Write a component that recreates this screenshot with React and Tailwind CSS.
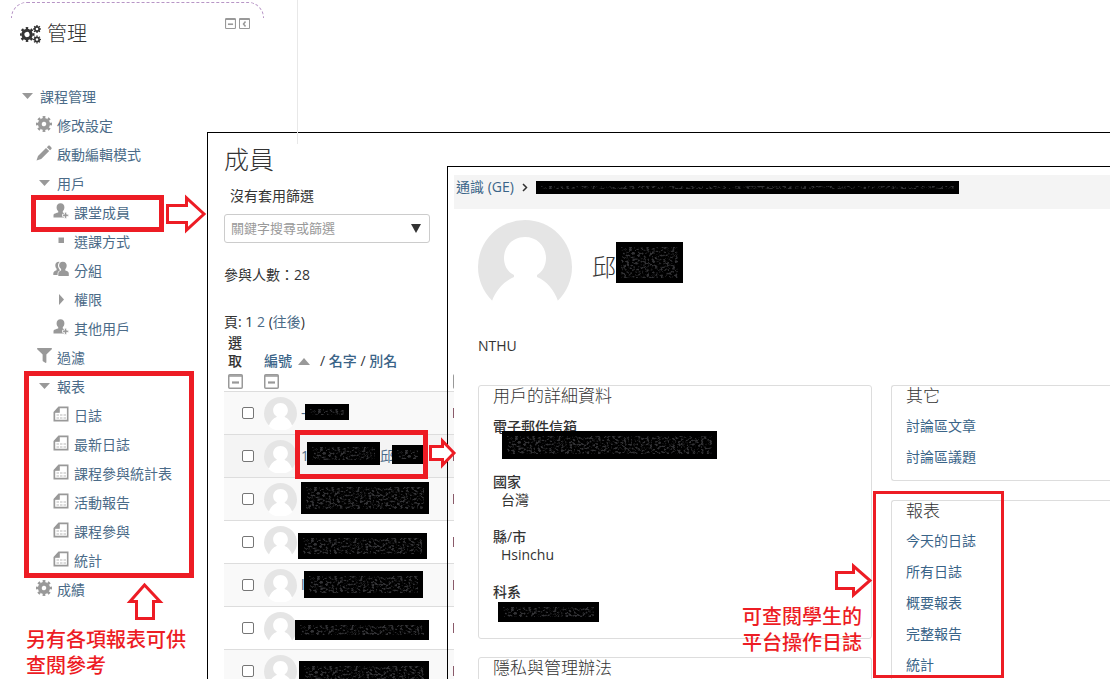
import { FaFilter } from "react-icons/fa"

const menu = {
  label: "課程管理",
  icon: "open",
  children: [
    { label: "修改設定", icon: "cog" },
    { label: "啟動編輯模式", icon: "pencil" },
    {
      label: "用戶",
      icon: "open",
      children: [
        { label: "課堂成員", icon: "user" },
        { label: "選課方式", icon: "dot" },
        { label: "分組", icon: "group" },
        { label: "權限", icon: "closed" },
        { label: "其他用戶", icon: "user" },
      ],
    },
    { label: "過濾", icon: "filter" },
    {
      label: "報表",
      icon: "open",
      children: [
        { label: "日誌", icon: "report" },
        { label: "最新日誌", icon: "report" },
        { label: "課程參與統計表", icon: "report" },
        { label: "活動報告", icon: "report" },
        { label: "課程參與", icon: "report" },
        { label: "統計", icon: "report" },
      ],
    },
    { label: "成績", icon: "cog" },
  ],
}

const members = [
  { id: 1, name: "-", row: "bg-[#f9f9f9]" },
  { id: 2, name: "1", family: "邱", row: "bg-[#f4f4f4]" },
  { id: 3, name: "", row: "bg-[#f9f9f9]" },
  { id: 4, name: "", row: "bg-white" },
  { id: 5, name: "l", row: "bg-[#f9f9f9]" },
  { id: 6, name: "", row: "bg-white" },
  { id: 7, name: "", row: "bg-[#f9f9f9]" },
]

const details = [
  { term: "電子郵件信箱", value: "" },
  { term: "國家", value: "台灣" },
  { term: "縣/市", value: "Hsinchu" },
  { term: "科系", value: "" },
]

// Zonas tapadas: datos personales
const masks = [
  { left: 305, top: 404, width: 44, height: 16 },
  { left: 307, top: 442, width: 73, height: 23 },
  { left: 392, top: 445, width: 31, height: 19 },
  { left: 301, top: 482, width: 128, height: 32 },
  { left: 298, top: 533, width: 129, height: 26 },
  { left: 304, top: 571, width: 119, height: 27 },
  { left: 295, top: 620, width: 134, height: 20 },
  { left: 299, top: 661, width: 130, height: 24 },
  { left: 536, top: 181, width: 423, height: 13 },
  { left: 616, top: 242, width: 67, height: 41 },
  { left: 502, top: 431, width: 215, height: 28 },
  { left: 498, top: 602, width: 101, height: 20 },
]

// Engranaje: un anillo y ocho dientes
const Gear = ({ x, y, r, hole }) => {
  const ring = r * 0.76
  return (
    <g transform={`translate(${x} ${y}) rotate(-11)`} fill="none" stroke="currentColor">
      <circle r={(ring + hole) / 2} strokeWidth={ring - hole} />
      <circle r={r * 0.85} strokeWidth={r * 0.3} pathLength="16" strokeDasharray="1 1" />
    </g>
  )
}

const MenuIcon = ({ name }) => {
  if (name === "filter") return <FaFilter size={15} />
  return (
    <svg width="16" height="16" viewBox="0 0 16 16" fill="currentColor" aria-hidden="true">
      {name === "cog" && <Gear x={8} y={8} r={8} hole={2.3} />}
      {name === "pencil" && (
        <path d="M12.300.8c.5-.4 1-.4 1.500 0l1.600 1.600c.4.5.4 1 0 1.500L14 5.300 10.800 2.200zM10 3l3.200 3.100-8 8L.500 15.500 2 11z" />
      )}
      {name === "open" && <path d="M3 6h11l-5.500 6z" />}
      {name === "closed" && <path d="M6 4l5 5.500-5 5.500z" />}
      {name === "dot" && <rect x="5.500" y="5.500" width="5.500" height="5.500" />}
      {name === "user" && (
        <>
          <path d="M7.500.3c2.600 0 4 1.700 3.900 4.100-.1 1.800-.8 2.900-1.600 3.700v1.400l2.200 1v4H.5v-2.200c0-1.300 1-1.800 4.700-2.800V8.100c-.8-.8-1.600-2-1.600-3.700C3.600 2 4.900.3 7.500.3z" />
          <path d="M11.500 9.200h2.200v2h2v2.200h-2v2h-2.200v-2h-2v-2.200h2z" stroke="#fff" strokeWidth=".8" />
        </>
      )}
      {name === "group" && (
        <>
          <path d="M6 .8C3.700.8 2.200 2.400 2.300 4.500c.1 1.500.6 2.500 1.300 3.200v1.600C1.500 10 .3 11 .3 12.500V14h4.300v-1.500c0-1.500.7-2.500 2.500-3.300C6 7.800 5 6.500 5 4.500c0-1.500.5-2.600 1.700-3.600z" />
          <path d="M9.800.8c2.600 0 4 1.700 3.900 4-.1 1.600-.7 2.600-1.400 3.400v1.200c2.700.8 3.500 1.500 3.500 3V15H5.300v-2.600c0-1.500 1-2.300 2.800-3V8.100C7.300 7.300 6.100 6.200 6.100 4.600 6.100 2.500 7.500.8 9.800.8z" />
        </>
      )}
      {name === "report" && (
        <>
          <path fillRule="evenodd" d="M5.500.5h10v15H.500V6zM6.800 2.200v4.600H2.200V13.800h11.700V2.200z" />
          <path d="M1 6.500L6 1v5.500z" opacity=".5" />
          <path d="M3.500 8h2.500v2H3.500zM7 8h2.500v2H7zM10.500 8h2.500v2h-2.500zM3.500 11h2.500v2H3.500zM7 11h2.500v2H7zM10.500 11h2.500v2h-2.500z" opacity=".35" />
        </>
      )}
    </svg>
  )
}

const MenuItem = ({ item }) => (
  <li>
    <a href="#" className="flex h-[29px] items-center gap-[5px] text-sm text-[#4b6b88]">
      <span className="flex w-4 justify-center pb-1 text-[#999999]">
        <MenuIcon name={item.icon} />
      </span>
      {item.label}
    </a>
    {item.children && (
      <ul className="pl-[17px]">
        {item.children.map((child) => (
          <MenuItem key={child.label} item={child} />
        ))}
      </ul>
    )}
  </li>
)

const Avatar = ({ className }) => (
  <svg className={className} viewBox="0 0 94 94" aria-hidden="true">
    <clipPath id="avatar-clip">
      <circle cx="47" cy="47" r="49" />
    </clipPath>
    <circle cx="47" cy="47" r="47" fill="#e5e5e5" />
    <path
      clipPath="url(#avatar-clip)"
      fill="#fff"
      d="M47 17c12 0 21 9 21 21 0 8-4 14-9 17v2c10 4 17 13 21 24l14 4v9H0v-9l14-4c4-11 12-20 22-24v-2c-6-3-10-9-10-17 0-12 9-21 21-21z"
    />
  </svg>
)

const BoxMinus = ({ label, className }) => (
  <button type="button" aria-label={label} className={className}>
    <svg className="size-full" viewBox="0 0 15 15" fill="none" stroke="#999">
      <rect x=".75" y=".75" width="13.500" height="13.500" rx="1" strokeWidth="1.500" />
      <path d="M1 2h13" strokeWidth="1.500" />
      <path d="M4 8.500h7" strokeWidth="2.200" />
    </svg>
  </button>
)

const Mask = ({ box }) => (
  <div className="absolute bg-black p-[5px]" style={box}>
    <svg className="block size-full">
      <rect width="100%" height="100%" fill="url(#grain)" />
    </svg>
  </div>
)

const Arrow = ({ className, width, height, d }) => (
  <svg
    className={className}
    width={width}
    height={height}
    viewBox={`0 0 ${width} ${height}`}
    fill="#fff"
    stroke="#ed1c24"
    strokeWidth="3"
    aria-hidden="true"
  >
    <path d={d} />
  </svg>
)

const Sidebar = () => (
  <aside className="w-[297px]">
    <div className="ml-[11px] pt-0.5">
      <div className="h-4 w-[253px] rounded-t-[20px] border border-b-0 border-dashed border-[#b795c6]" />
    </div>
    <div className="flex items-start justify-between pr-[47px] pl-5">
      <h2 className="mt-0.5 flex items-center gap-1.5 text-xl leading-7 font-light text-[#333333]">
        <svg width="21" height="20" viewBox="0 0 21 20" aria-hidden="true">
          <Gear x={7} y={10.5} r={7.5} hole={2.6} />
          <Gear x={17} y={5} r={4} hole={1.3} />
          <Gear x={17} y={15.5} r={4} hole={1.3} />
        </svg>
        管理
      </h2>
      <div className="flex gap-[3px]">
        <BoxMinus label="收合區塊" className="size-[11px]" />
        <button type="button" aria-label="停駐區塊" className="size-[11px]">
          <svg className="size-full" viewBox="0 0 11 11" fill="none" stroke="#999">
            <path d="M.5.5h10v10H.5zM.5 1.500h10" />
            <path d="M6.500 3.500l-2 2.500 2 2.500" strokeWidth="1.500" />
          </svg>
        </button>
      </div>
    </div>
    <nav className="mt-[34px] pl-[19px]">
      <ul>
        <MenuItem item={menu} />
      </ul>
    </nav>
  </aside>
)

const MembersTable = () => (
  <table className="mt-0.5 w-full table-fixed text-sm">
    <colgroup>
      <col className="w-10" />
      <col className="w-[189px]" />
      <col />
    </colgroup>
    <thead>
      <tr className="text-left align-bottom leading-[18px]">
        <th className="pb-0.5 pl-1 font-medium">
          <span className="block w-4">選取</span>
          <BoxMinus label="隱藏選取" className="mt-1 block size-[15px]" />
        </th>
        <th className="pb-0.5 font-medium">
          <span className="flex items-center gap-1.5 text-[#3a6488]">
            <a href="#">編號</a>
            <svg width="12" height="7" viewBox="0 0 12 7" fill="#999" aria-hidden="true">
              <path d="M6 0l6 7H0z" />
            </svg>
            <span className="pl-1">
              <span className="text-[#333333]">/</span> <a href="#">名字</a> <span className="text-[#333333]">/</span>{" "}
              <a href="#">別名</a>
            </span>
          </span>
          <BoxMinus label="隱藏編號" className="mt-1 block size-[15px]" />
        </th>
        <th className="pb-0.5">
          <BoxMinus label="隱藏欄位" className="block size-[15px]" />
        </th>
      </tr>
    </thead>
    <tbody>
      {members.map((member) => (
        <tr key={member.id} className={`h-[43px] border-t border-[#dddddd] ${member.row}`}>
          <td className="pl-[18px]">
            <input
              type="checkbox"
              aria-label={`選取 ${member.id}`}
              className="block size-3 appearance-none rounded-[2px] border border-[#767676] bg-white"
            />
          </td>
          <td>
            <a href="#" className="flex items-center gap-1 text-[#4b6b88]">
              <Avatar className="size-[33px]" />
              <span>{member.name}</span>
              {member.family && <span className="pl-[67px]">{member.family}</span>}
            </a>
          </td>
          <td>
            <span className="block h-2.5 w-px bg-[#8a5a6a]" />
          </td>
        </tr>
      ))}
    </tbody>
  </table>
)

const MembersWindow = () => (
  <section className="absolute top-[132px] right-0 bottom-0 left-[207px] overflow-hidden border-t border-l border-black bg-white pt-2.5 pl-4">
    <h1 className="text-[25px] leading-8 font-light">成員</h1>
    <label htmlFor="filter" className="mt-[11px] block pl-1.5 text-sm leading-5">
      沒有套用篩選
    </label>
    <div className="mt-2 flex h-[29px] w-[206px] items-center rounded-[3px] border border-[#cccccc] px-1.5">
      <input
        id="filter"
        type="text"
        placeholder="關鍵字搜尋或篩選"
        className="min-w-0 flex-1 text-[13px] outline-none placeholder:text-[#999999]"
      />
      <button type="button" aria-label="展開" className="pr-0.5">
        <svg width="10" height="9" viewBox="0 0 10 9" fill="#333">
          <path d="M0 0h10L5 9z" />
        </svg>
      </button>
    </div>
    <p className="mt-[22px] text-sm leading-5">參與人數：28</p>
    <p className="mt-[27px] text-sm leading-5">
      頁: 1{" "}
      <a href="#" className="text-[#4b6b88]">
        2
      </a>{" "}
      (
      <a href="#" className="text-[#4b6b88]">
        往後
      </a>
      )
    </p>
    <MembersTable />
  </section>
)

const LinkCard = ({ title, links, className }) => (
  <section className={`rounded-l-[3px] border border-r-0 border-[#dddddd] pb-2 pl-3.5 ${className}`}>
    <h3 className="text-[17px] leading-5 font-light">{title}</h3>
    <ul className="mt-1 text-sm text-[#3a6488]">
      {links.map((link) => (
        <li key={link} className="flex h-[31px] items-center">
          <a href="#">{link}</a>
        </li>
      ))}
    </ul>
  </section>
)

const ProfileWindow = () => (
  <section className="absolute top-[166px] right-0 bottom-0 left-[447px] overflow-hidden border-t border-l border-black pl-1.5">
    <div className="min-h-full bg-white pt-2">
      <nav className="flex h-[34px] gap-2 bg-[#f4f4f4] pt-0.5 pl-0.5 text-sm leading-5">
        <a href="#" className="text-[#3a6488]">
          通識 (GE)
        </a>
        <svg className="mt-1.5" width="6" height="9" viewBox="0 0 6 9" fill="none" stroke="#333" strokeWidth="1.500">
          <path d="M1 1l3.500 3.500L1 8" />
        </svg>
      </nav>
      <div className="pl-6">
        <div className="mt-[11px] flex items-center gap-5">
          <Avatar className="size-[94px]" />
          <h1 className="text-2xl font-light">邱</h1>
        </div>
        <p className="mt-[22px] text-sm leading-5">NTHU</p>
        <div className="mt-[29px] grid grid-cols-[9fr_5fr] gap-[19px]">
          <div>
            <section className="rounded-[3px] border border-[#dddddd] pb-[19px] pl-3.5">
              <h3 className="text-[17px] leading-5 font-light">用戶的詳細資料</h3>
              <dl className="mt-3 flex flex-col gap-[19px] text-sm leading-[18px]">
                {details.map((detail) => (
                  <div key={detail.term}>
                    <dt className="font-medium">{detail.term}</dt>
                    <dd className="h-[18px] pl-2">{detail.value}</dd>
                  </div>
                ))}
              </dl>
            </section>
            <section className="mt-[18px] rounded-[3px] border border-[#dddddd] pb-5 pl-3.5">
              <h3 className="text-[17px] leading-5 font-light">隱私與管理辦法</h3>
            </section>
          </div>
          <div>
            <LinkCard title="其它" links={["討論區文章", "討論區議題"]} />
            <LinkCard
              title="報表"
              links={["今天的日誌", "所有日誌", "概要報表", "完整報告", "統計"]}
              className="mt-[19px]"
            />
          </div>
        </div>
      </div>
    </div>
  </section>
)

// Marcas rojas y notas por encima de las ventanas
const Annotations = () => (
  <>
    <svg className="absolute size-0" aria-hidden="true">
      <filter id="noise" x="0" y="0" width="100%" height="100%" colorInterpolationFilters="sRGB">
        <feTurbulence type="fractalNoise" baseFrequency="0.35 0.5" numOctaves="2" seed="4" />
        <feColorMatrix values="0 0 0 0 .2  0 0 0 0 .2  0 0 0 0 .21  5 0 0 0 -2.400" />
      </filter>
      <pattern id="grain" width="440" height="60" patternUnits="userSpaceOnUse">
        <rect width="440" height="60" filter="url(#noise)" />
      </pattern>
    </svg>
    {masks.map((box) => (
      <Mask key={`${box.left}-${box.top}`} box={box} />
    ))}

    <div className="absolute top-[195px] left-[31px] h-[37px] w-[133px] border-5 border-[#ed1c24]" />
    <div className="absolute top-[371px] left-6 h-[207px] w-[170px] border-5 border-[#ed1c24]" />
    <div className="absolute top-[430px] left-[295px] h-[49px] w-[133px] border-5 border-[#ed1c24]" />
    <div className="absolute top-[491px] left-[873px] h-[187px] w-[131px] border-3 border-[#ed1c24]" />

    <Arrow className="absolute top-[194px] left-[166px]" width={41} height={40} d="M1.500 11.500h19V4L38 20 20.500 36v-7.500h-19z" />
    <Arrow className="absolute top-[581px] left-[126px]" width={38} height={40} d="M10.500 37.500v-17H4L18.500 4 34 20.500h-6.500v17z" />
    <Arrow className="absolute top-[437px] left-[429px]" width={28} height={32} d="M1.500 9.500h12V4L25 16 13.500 28v-5.500h-12z" />
    <Arrow className="absolute top-[562px] left-[835px]" width={38} height={37} d="M1.500 10.500h17V4L35 18.500 18.500 33v-6.500h-17z" />

    <p className="absolute top-[626px] left-[26px] w-[170px] font-['DFKai-SB','BiauKai','Noto_Sans_CJK_TC',sans-serif] text-xl leading-[26px] font-medium text-[#ed1c24]">
      另有各項報表可供查閱參考
    </p>
    <p className="absolute top-[603px] left-[742px] w-[130px] font-['DFKai-SB','BiauKai','Noto_Sans_CJK_TC',sans-serif] text-xl leading-[26px] font-medium text-[#ed1c24]">
      可查閱學生的平台操作日誌
    </p>
  </>
)

export default function App() {
  return (
    <div
      lang="zh-Hant"
      className="relative h-screen overflow-hidden bg-white font-['Open_Sans','Noto_Sans_CJK_TC',sans-serif] text-[#333333]"
    >
      <Sidebar />
      <MembersWindow />
      <div className="absolute top-0 left-[297px] h-36 w-px bg-[#e8e8e8]" />
      <ProfileWindow />
      <Annotations />
    </div>
  )
}
